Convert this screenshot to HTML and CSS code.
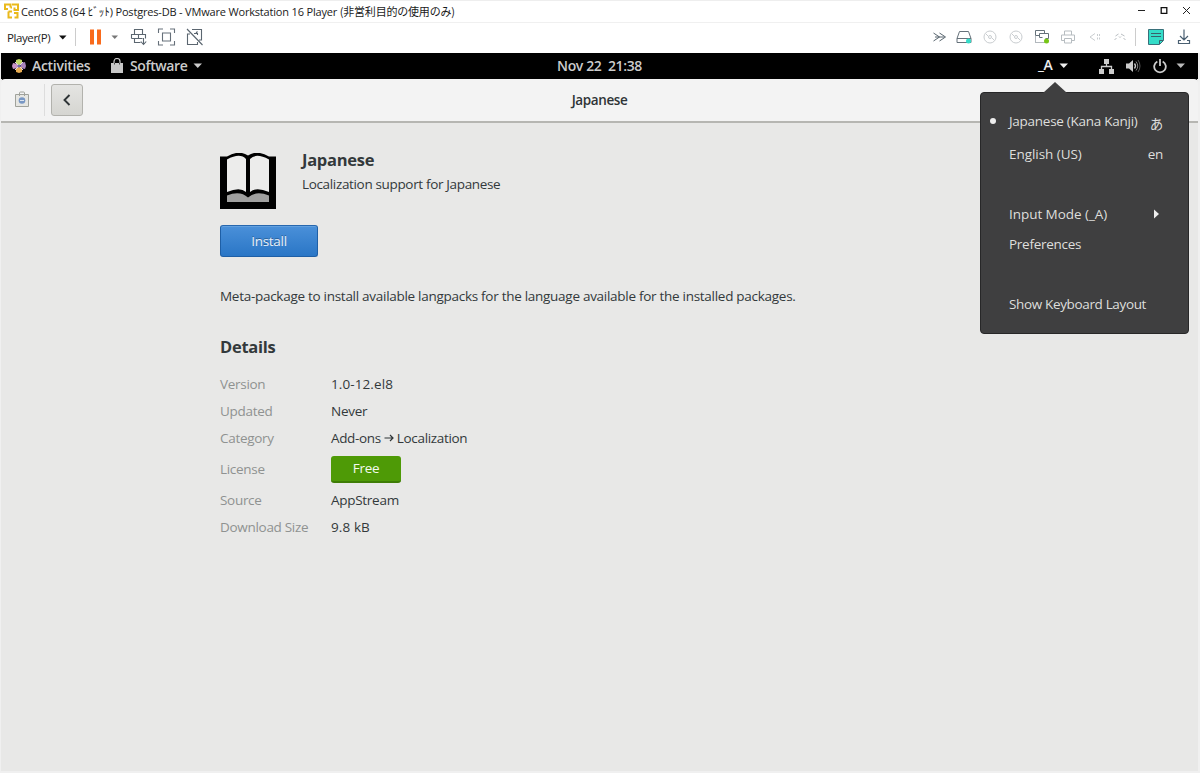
FILE: index.html
```html
<!DOCTYPE html>
<html lang="en">
<head>
<meta charset="utf-8">
<title>CentOS 8 - VMware Workstation 16 Player</title>
<link rel="stylesheet" href="styles.css">
</head>
<body>
<div class="window">
  <header class="titlebar">
    <svg class="vm-logo" width="18" height="18" viewBox="0 0 18 18" fill="none" stroke="#eab91c" stroke-width="2"><path d="M2 7.500V2.500H7.500V5.500M1 7H5M9 2.500H15V8H11.500V5.500M5.500 9.500V15.500H9M9 9.500H5.500M11 11H14.500V15.500H11.500M7.500 5.500H9"/></svg>
    <span class="window-title">CentOS 8 (64 <span class="half">ﾋﾞｯﾄ</span>) Postgres-DB - VMware Workstation 16 Player <span class="jp">(非営利目的の使用のみ)</span></span>
    <div class="window-controls">
      <svg width="22" height="22" viewBox="0 0 22 22" stroke="#222" fill="none"><path d="M7 10.500h7"/></svg>
      <svg width="22" height="22" viewBox="0 0 22 22" stroke="#111" fill="none" stroke-width="1.300"><path d="M8.200 7.700h5.600v5.600H8.200z"/></svg>
      <svg width="22" height="22" viewBox="0 0 22 22" stroke="#222" fill="none"><path d="M8 7l7 7M15 7l-7 7"/></svg>
    </div>
  </header>
  <nav class="toolbar">
    <span class="player">Player(P)</span>
    <svg class="player-caret" width="8" height="5" viewBox="0 0 8 5"><path d="M0 .5h7.500L3.750 4.500z" fill="#111"/></svg>
    <i class="rule rule-left"></i>
    <svg class="pause" width="13" height="16" viewBox="0 0 13 16"><path d="M1 .5h4v15H1zM8 .5h4v15H8z" fill="#f96a1b"/></svg>
    <svg class="pause-caret" width="8" height="5" viewBox="0 0 8 5"><path d="M.5.5h6.500L3.750 4z" fill="#777"/></svg>
    <svg class="tool" width="28" height="20" viewBox="0 0 28 20" fill="none" stroke="#5b6670" stroke-width="1.100"><path d="M9.500 7V2.500h8V7M6.500 11.500v-4h14v4M6.500 11.500h11M13.500 7.500v4M9.500 11.500v4h6M18.500 11v6M15.800 14.500l2.700 3 2.700-3"/></svg>
    <svg class="tool" width="28" height="20" viewBox="0 0 28 20" fill="none" stroke="#66707a" stroke-width="1.100"><path d="M5.500 6V2H10M17 2h4.500v4M21.500 14v4H17M10 18H5.500v-4M9.500 6h8v8h-8z"/></svg>
    <svg class="tool" width="28" height="20" viewBox="0 0 28 20" fill="none" stroke="#5b6670" stroke-width="1.100"><path d="M11 2.500h9.500V13H18M15.500 17.500H6.500V7H9M16.500 8V6.500H13M16.500 15v2.500H15M6 2l15.500 16M15 6l1.500-1.500"/></svg>
    <div class="devices">
      <svg width="26" height="22" viewBox="0 0 26 22" fill="none" stroke="#58656e"><path d="M8.500 7l6 4-6 4M14.500 7l6 4-6 4M10 11h9"/></svg>
      <svg width="26" height="22" viewBox="0 0 26 22" fill="none" stroke="#65717a"><path d="M8.500 5.500h9l2.500 7v4h-14v-4zM6 12.500h14"/><circle cx="17.500" cy="15" r="2.500" fill="#34dcc8" stroke="none"/></svg>
      <svg width="26" height="22" viewBox="0 0 26 22" fill="none" stroke="#c9cdd0"><circle cx="13" cy="11" r="6"/><circle cx="13" cy="11" r="1.500"/><path d="M9 8l2 2M15 12l2 2"/></svg>
      <svg width="26" height="22" viewBox="0 0 26 22" fill="none" stroke="#c9cdd0"><circle cx="13" cy="11" r="6"/><circle cx="13" cy="11" r="1.500"/><path d="M9 8l2 2M15 12l2 2"/></svg>
      <svg width="26" height="22" viewBox="0 0 26 22" fill="none" stroke="#65717a"><path d="M10.500 9.500h-4v-5h9V7M10.500 7.500h9v5h-3M10.500 7.500v4h3"/><path d="M6.500 10.500v6h9" stroke-dasharray="1 1"/><circle cx="17.500" cy="15" r="2.500" fill="#76c615" stroke="none"/></svg>
      <svg width="26" height="22" viewBox="0 0 26 22" fill="none" stroke="#b7bdc1"><path d="M9.500 9V5h7v4M9.500 14.500h-3V9h13v5.500h-3M9.500 12.500h7V17h-7z"/></svg>
      <svg width="26" height="22" viewBox="0 0 26 22" fill="none" stroke="#c9cdd0"><path d="M14 7.500l-5 3.500 5 3.500"/><path d="M16.500 8v6M18.500 8v6" stroke-dasharray="2 1.500"/></svg>
      <svg width="26" height="22" viewBox="0 0 26 22" fill="none" stroke="#b9bec2"><path d="M8.500 10l3-2M14 8l3.500 2M9.500 12l-2 2M16.500 12l2 2M12 10.500l1 1 1-1"/></svg>
    </div>
    <i class="rule rule-right"></i>
    <svg class="note" width="18" height="18" viewBox="0 0 18 18"><path d="M1.500 1.500h15v11l-4 4h-11z" fill="#34dcc8" stroke="#39707a"/><path d="M4 5.500h10M4 8.500h10M12.500 16v-3.500H16" stroke="#39606b" fill="none"/></svg>
    <svg class="download" width="16" height="18" viewBox="0 0 16 18" fill="none" stroke="#4a6072" stroke-width="1.200"><path d="M8 1.500v10M4 8l4 4 4-4M5 12.500H2.500v3h11v-3H11"/></svg>
  </nav>

  <div class="guest">
    <div class="topbar">
      <svg class="centos" width="14" height="14" viewBox="0 0 14 14"><path d="M4 1l3-1 3 1v5H4z" fill="#c2d867"/><path d="M9 4l4-1 1 4-1 3-5-1z" fill="#a884bd"/><path d="M4 8h6v5l-3 1-3-1z" fill="#e8ad52"/><path d="M1 4l5 1v4l-5 1-1-3z" fill="#c893c4"/><path d="M3 3l8 8M11 3l-8 8" stroke="#e2dae2"/><circle cx="7" cy="7" r="1.500" fill="#6f67a8"/></svg>
      <span class="activities">Activities</span>
      <svg class="bag" width="12" height="16" viewBox="0 0 12 16"><path d="M0 5h12v10H0z" fill="#c8c8c8"/><path d="M3 7V3.500a3 3 0 0 1 6 0V7" fill="none" stroke="#c8c8c8" stroke-width="1.200"/><path d="M3.500 5v1.500M8.500 5v1.500" stroke="#444"/></svg>
      <span class="software">Software</span>
      <svg class="software-caret" width="10" height="6" viewBox="0 0 10 6"><path d="M.5.5h8.500L4.750 5z" fill="#ccc"/></svg>
      <span class="clock">Nov 22&nbsp; 21:38</span>
      <div class="status">
        <span class="input-source"><b>_A</b><svg width="10" height="6" viewBox="0 0 10 6"><path d="M.5.5h8.500L4.750 5z" fill="#eee"/></svg></span>
        <svg class="network" width="15" height="15" viewBox="0 0 15 15"><path d="M5 0h5v5H5zM0 10h5v5H0zM10 10h5v5h-5z" fill="#ccc"/><path d="M2.500 10V7.500h10V10M7.500 4v3.500" stroke="#ccc" fill="none" stroke-width="1.300"/></svg>
        <svg class="sound" width="15" height="14" viewBox="0 0 15 14"><path d="M0 4.500h3L7 1v12L3 9.500H0z" fill="#ccc"/><path d="M8.500 4.500q2 2.500 0 5" stroke="#ccc" fill="none" stroke-width="1.300"/><path d="M10 2.500q3.500 4.500 0 9" stroke="#888" fill="none"/><path d="M12 1q4 6 0 12" stroke="#555" fill="none"/></svg>
        <svg class="power" width="14" height="15" viewBox="0 0 14 15" fill="none" stroke="#ccc" stroke-width="1.800"><path d="M4.300 2.500a5.800 5.800 0 1 0 5.400 0M7 0v7"/></svg>
        <svg class="status-caret" width="10" height="6" viewBox="0 0 10 6"><path d="M.5.5h8.500L4.750 5z" fill="#bbb"/></svg>
      </div>
    </div>

    <div class="headerbar">
      <svg class="app-icon" width="16" height="17" viewBox="0 0 16 17"><path d="M1.500 3.500h13v12h-13z" fill="#e6e6e2" stroke="#a0a29b"/><path d="M5.500 5V2a1 1 0 0 1 1-1h3a1 1 0 0 1 1 1v3" fill="none" stroke="#a0a29b"/><circle cx="8" cy="9.500" r="3.300" fill="#7897c4"/><path d="M6 9.500h4" stroke="#dce4ef"/></svg>
      <i class="header-rule"></i>
      <button class="back"><svg width="10" height="12" viewBox="0 0 10 12"><path d="M7.500 1L2.500 6l5 5" fill="none" stroke="#2e3436" stroke-width="1.900"/></svg></button>
      <strong class="page-title">Japanese</strong>
    </div>

    <main class="content">
      <section class="summary">
        <svg class="book" width="56" height="56" viewBox="0 0 56 56"><path d="M0 3.500H7Q19-3.500 28 2.500Q37-3.500 49 3.500H56V56H0z" fill="#000"/><path d="M7 6.500Q20-.500 26 6V39Q20 33.500 7 39zM30 6Q36-.500 49 6.500V39Q36 33.500 30 39z" fill="#ececeb"/><path d="M7 42.500Q20 37 28 44.500Q36 37 49 42.500V49H7z" fill="#a0a09f"/></svg>
        <div class="heading"><h1>Japanese</h1><p>Localization support for Japanese</p></div>
      </section>
      <button class="install"><span>Install</span></button>
      <p class="description">Meta-package to install available langpacks for the language available for the installed packages.</p>
      <h2>Details</h2>
      <dl class="details">
        <dt>Version</dt><dd class="version">1.0-12.el8</dd>
        <dt>Updated</dt><dd>Never</dd>
        <dt>Category</dt><dd class="category">Add-ons <svg width="10" height="8" viewBox="0 0 10 8" fill="none" stroke="#2e3436" stroke-width="1.200"><path d="M.5 4H9M6 1l3 3-3 3"/></svg> Localization</dd>
        <dt>License</dt><dd><span class="free">Free</span></dd>
        <dt>Source</dt><dd>AppStream</dd>
        <dt>Download Size</dt><dd class="version">9.8 kB</dd>
      </dl>
    </main>
  </div>
</div>

<aside class="menu">
  <div class="item first"><i class="dot"></i><span>Japanese (Kana Kanji)</span><span class="code kana">あ</span></div>
  <div class="item second"><span class="wide">English (US)</span><span class="code">en</span></div>
  <div class="item gap"><span class="wide">Input Mode (_A)</span><svg class="sub" width="6" height="10" viewBox="0 0 6 10"><path d="M0 .5v9L5 5z" fill="#eee"/></svg></div>
  <div class="item"><span>Preferences</span></div>
  <div class="item gap"><span class="layout">Show Keyboard Layout</span></div>
</aside>
</body>
</html>
```
FILE: styles.css
```css
* { box-sizing: border-box; }
body { margin: 0; width: 1200px; height: 773px; overflow: hidden; background: #f0f0f0; font-family: "Open Sans", "Noto Sans", "Noto Sans CJK JP", sans-serif; }
svg { display: block; flex: none; }
h1, h2, p, dl, dd { margin: 0; }
i { display: block; flex: none; }
span, strong { white-space: nowrap; }
button { padding: 0; font: inherit; letter-spacing: inherit; }

.window { display: flex; flex-direction: column; height: 771px; }
.titlebar { display: flex; align-items: center; height: 23px; padding: 0 3px 1px; background: #fff; border-top: 1px solid #eee; border-bottom: 1px solid #f0f0f0; }
.window-title { font-size: 11px; line-height: 20px; color: #1a1a1a; letter-spacing: -.18px; }
.half { display: inline-block; width: 22px; font-family: "Noto Sans CJK JP", sans-serif; font-size: 11px; letter-spacing: 0; }
.jp { font-family: "Noto Sans CJK JP", sans-serif; letter-spacing: -.2px; }
.window-controls { display: flex; margin-left: auto; }

.toolbar { display: flex; align-items: center; height: 30px; padding: 0 8px 2px 7px; background: #fff; }
.player { width: 52px; font-size: 11.5px; letter-spacing: -.4px; color: #222; }
.rule { width: 1px; height: 18px; background: #ccc; }
.rule-left { margin: 0 13px 0 8px; }
.pause-caret { margin: 0 6px 0 9px; }
.devices { display: flex; margin-left: auto; }
.rule-right { margin: 0 11px 0 2px; }
.download { margin-left: 11px; }

.guest { display: flex; flex: 1; flex-direction: column; margin: 0 2px 0 1px; background: #e8e8e7; }
.topbar { position: relative; display: flex; align-items: center; height: 26px; padding: 0 12px 0 11px; background: #000; color: #ccc; font-size: 14px; line-height: 20px; font-weight: 600; letter-spacing: -.38px; }
.topbar > span, .input-source b { padding-bottom: 1px; }
.activities { width: 79px; margin-left: 6px; letter-spacing: -.3px; }
.software { width: 63px; margin-left: 7px; }
.clock { position: absolute; left: 50%; transform: translateX(-50%); }
.status { display: flex; align-items: center; align-self: stretch; margin-left: auto; }
.input-source { display: flex; align-items: center; gap: 7px; width: 57px; height: 26px; padding-left: 11px; border-bottom: 2px solid #2a76c6; color: #eee; }
.input-source b { font-weight: 600; }
.input-source svg { margin-top: 2px; }
.network { margin: 0 12px 0 15px; }
.power { margin: 0 9px 0 12px; }

.headerbar { position: relative; display: flex; align-items: center; height: 44px; padding: 0 13px 1px; border-radius: 4px 4px 0 0; border-bottom: 2px solid #b6b6b2; background: #f3f3f3; box-shadow: 0 -4px 0 -1px #000; }
.header-rule { width: 1px; height: 32px; margin: 0 6px 0 14px; background: #ddd; }
.back { display: flex; align-items: center; justify-content: center; width: 32px; height: 32px; border: 1px solid #b2b2ad; border-radius: 3px; background: linear-gradient(#e4e4e2, #d5d5d1); }
.page-title { position: absolute; left: 50%; transform: translateX(-50%); font-size: 13.5px; font-weight: 600; line-height: 20px; letter-spacing: -.4px; color: #2e3436; }

.content { padding: 29px 0 0 219px; color: #33393b; font-size: 13.5px; line-height: 18px; letter-spacing: -.28px; }
.summary { display: flex; gap: 26px; height: 73px; }
.book { margin-top: 1px; }
.heading { margin-top: -4px; }
h1 { font-size: 16.5px; line-height: 24px; font-weight: 700; }
.heading p { margin-top: 3px; white-space: nowrap; letter-spacing: -.34px; }
.install { display: flex; align-items: center; justify-content: center; width: 98px; height: 32px; padding-bottom: 1px; border: 1px solid #1e5fa6; border-top-color: #2767ae; border-radius: 3px; background: linear-gradient(#4a90d9, #2a76c6); box-shadow: inset 0 1px #62a0df; color: #e9f0f8; text-shadow: 0 -1px rgba(0, 0, 0, .3); }
.description { margin-top: 30px; white-space: nowrap; }
h2 { margin-top: 30px; font-size: 16.5px; line-height: 24px; font-weight: 700; }
.details { display: grid; grid-template-columns: 111px 300px; grid-template-rows: 27px 27px 28px 34px 27px 27px; align-items: center; margin-top: 11px; }
.details dt { color: #8f9291; white-space: nowrap; letter-spacing: -.3px; }
.version { letter-spacing: .1px; }
.category { display: flex; align-items: center; gap: 3px; letter-spacing: -.34px; }
.free { display: block; width: 70px; height: 27px; border-bottom: 2px solid #3e7d05; border-radius: 3px; background: #4e9a06; color: #f5faf0; line-height: 24px; text-align: center; }

.menu { position: absolute; left: 980px; top: 92px; width: 209px; height: 242px; padding-top: 11px; border: 1px solid #272728; border-radius: 4px; background: #3f3f40; color: #dededc; font-size: 13.5px; letter-spacing: -.27px; }
.menu::before { content: ""; position: absolute; left: 62px; top: -11px; border: solid transparent; border-width: 0 12px 11px; border-bottom-color: #3f3f40; }
.item { display: flex; align-items: center; height: 30px; padding-left: 28px; padding-right: 25px; }
.first { height: 33px; padding-left: 9px; }
.second { height: 33px; }
.wide { letter-spacing: -.05px; }
.layout { letter-spacing: -.35px; }
.dot { width: 6px; height: 6px; margin: 1px 13px 0 0; border-radius: 50%; background: #eee; }
.code { margin-left: auto; }
.kana { padding-top: 4px; }
.gap { margin-top: 30px; }
.second + .gap { margin-top: 29px; }
.sub { margin-left: auto; margin-right: 3px; }
```
